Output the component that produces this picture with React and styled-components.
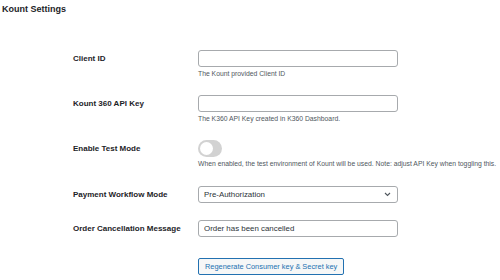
import React, { useState } from 'react';
import styled, { createGlobalStyle } from 'styled-components';

const GlobalStyle = createGlobalStyle`
  body {
    margin: 0;
    background: #ffffff;
    font-family: "Liberation Sans", Arial, sans-serif;
    color: #1d2327;
  }
`;

const Page = styled.div`
  width: 500px;
  height: 280px;
  overflow: hidden;
  padding: 3px 0 0 2px;
  box-sizing: border-box;
`;

const Title = styled.h2`
  margin: 0;
  font-size: 9px;
  line-height: 12px;
  font-weight: bold;
  color: #1d2327;
`;

const Form = styled.div`
  margin-top: 35px;
  padding-left: 71px;
  display: flex;
  flex-direction: column;
`;

const Row = styled.div`
  display: grid;
  grid-template-columns: 125px 1fr;
  align-items: start;
  padding-bottom: ${(p) => p.$gap || 17}px;
`;

const Label = styled.label`
  font-size: 8px;
  line-height: 17px;
  font-weight: bold;
  color: #1d2327;
`;

const Field = styled.div`
  display: flex;
  flex-direction: column;
  align-items: flex-start;
`;

const TextInput = styled.input`
  width: 200px;
  height: 17px;
  box-sizing: border-box;
  border: 1px solid #a7aaad;
  border-radius: 3px;
  padding: 0 5px;
  font-family: inherit;
  font-size: 7.9px;
  color: #2c3338;
  background: #fff;
  outline: none;
`;

const SelectBox = styled.div`
  width: 200px;
  height: 17px;
  box-sizing: border-box;
  border: 1px solid #a7aaad;
  border-radius: 3px;
  padding: 0 6px 0 5px;
  display: flex;
  align-items: center;
  justify-content: space-between;
  font-size: 7.9px;
  color: #2c3338;
  background: #fff;
`;

const Description = styled.p`
  margin: 3px 0 0;
  font-size: 6.8px;
  line-height: 8px;
  color: #50575e;
  white-space: nowrap;
`;

const Toggle = styled.button`
  width: 24px;
  height: 17px;
  border: none;
  border-radius: 9px;
  padding: 0;
  background: ${(p) => (p.$on ? '#2271b1' : '#d2d2d2')};
  position: relative;
  cursor: pointer;

  &::after {
    content: '';
    position: absolute;
    top: 2px;
    left: ${(p) => (p.$on ? '9px' : '2px')};
    width: 13px;
    height: 13px;
    border-radius: 50%;
    background: #fff;
  }
`;

const Button = styled.button`
  margin-top: 4px;
  height: 17px;
  padding: 0 6px;
  border: 1px solid #2271b1;
  border-radius: 2px;
  background: #f6f7f7;
  color: #2271b1;
  font-family: inherit;
  font-size: 7.4px;
  cursor: pointer;
`;

const Chevron = () => (
  <svg width="7" height="5" viewBox="0 0 7 5">
    <path d="M1 1l2.5 2.5L6 1" fill="none" stroke="#50575e" strokeWidth="1.1" />
  </svg>
);

const App = () => {
  const [testMode, setTestMode] = useState(false);

  return (
    <Page>
      <GlobalStyle />
      <Title>Kount Settings</Title>
      <Form>
        <Row>
          <Label>Client ID</Label>
          <Field>
            <TextInput type="text" />
            <Description>The Kount provided Client ID</Description>
          </Field>
        </Row>
        <Row>
          <Label>Kount 360 API Key</Label>
          <Field>
            <TextInput type="text" />
            <Description>The K360 API Key created in K360 Dashboard.</Description>
          </Field>
        </Row>
        <Row $gap={18}>
          <Label>Enable Test Mode</Label>
          <Field>
            <Toggle $on={testMode} onClick={() => setTestMode(!testMode)} />
            <Description>
              When enabled, the test environment of Kount will be used. Note: adjust API Key when toggling this.
            </Description>
          </Field>
        </Row>
        <Row>
          <Label>Payment Workflow Mode</Label>
          <Field>
            <SelectBox>
              <span>Pre-Authorization</span>
              <Chevron />
            </SelectBox>
          </Field>
        </Row>
        <Row>
          <Label>Order Cancellation Message</Label>
          <Field>
            <TextInput type="text" defaultValue="Order has been cancelled" />
          </Field>
        </Row>
        <Row>
          <span />
          <Field>
            <Button>Regenerate Consumer key &amp; Secret key</Button>
          </Field>
        </Row>
      </Form>
    </Page>
  );
};

export default App;
